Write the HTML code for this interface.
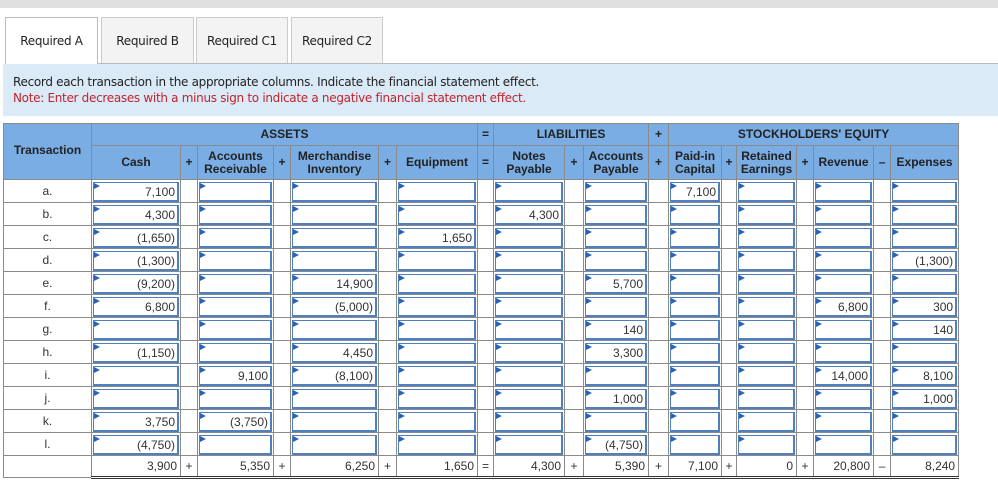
<!DOCTYPE html>
<html><head><meta charset="utf-8"><style>
body{margin:0;background:#fff;width:998px;height:482px;overflow:hidden;font-family:"Liberation Sans",Arial,sans-serif;position:relative}
.top{position:absolute;left:0;top:0;width:998px;height:8px;background:#e0e0e0}
.tab{position:absolute;top:17px;height:46px;border:1px solid #ccc;border-bottom:none;background:#f3f3f3;font-family:"DejaVu Sans",sans-serif;font-size:12px;color:#222;text-align:center;line-height:46px;box-sizing:border-box;letter-spacing:-0.3px}
.tab.a{background:#fff;border-color:#bbb;height:47px}
.tline{position:absolute;left:97px;top:63px;width:901px;height:1px;background:#bbb}
.note{position:absolute;left:3px;top:64px;width:995px;height:52px;background:#dbeaf7;font-family:"DejaVu Sans",sans-serif;font-size:12px;letter-spacing:-0.3px}
.note div{position:absolute;left:10px;white-space:nowrap}
table{position:absolute;left:3px;top:123px;border-collapse:collapse;table-layout:fixed;width:955px}
td,th{border:1px solid #8a8a8a;padding:0;font-size:12px;color:#222;overflow:hidden;white-space:nowrap}
th{background:#79ade4;font-weight:bold;text-align:center;line-height:13px}
tr.h1 th{height:21px}
tr.h2 th{height:33px}
td{height:22px;background:#fff}
td.t{text-align:center;color:#333}
td.i div{margin:1px 1px 0 1px;height:17px;border:2px solid #4f7fbd;border-top-width:1px;border-left-width:1px;text-align:right;padding-right:2px;line-height:18px;position:relative;color:#333;box-sizing:content-box}
td.i div:before{content:"";position:absolute;left:0;top:0;border-left:6px solid #2a63b5;border-top:3px solid transparent;border-bottom:3px solid transparent}
tr.tot td{text-align:right;padding-right:3px;border-bottom:3px double #333;color:#333;height:20px}
tr.tot td.o{text-align:center;padding:0}
</style></head><body>
<div class="top"></div>
<div class="tab a" style="left:5px;width:93px">Required A</div>
<div class="tab" style="left:101px;width:93px">Required B</div>
<div class="tab" style="left:196px;width:92px">Required C1</div>
<div class="tab" style="left:291px;width:92px">Required C2</div>
<div class="tline"></div>
<div class="note"><div style="top:11px;color:#222">Record each transaction in the appropriate columns. Indicate the financial statement effect.</div><div style="top:27px;color:#c0242c">Note: Enter decreases with a minus sign to indicate a negative financial statement effect.</div></div>
<table>
<colgroup><col style="width:88px"><col style="width:89px"><col style="width:17px"><col style="width:76px"><col style="width:17px"><col style="width:88px"><col style="width:18px"><col style="width:81px"><col style="width:16px"><col style="width:71px"><col style="width:19px"><col style="width:65px"><col style="width:20px"><col style="width:53px"><col style="width:15px"><col style="width:60px"><col style="width:17px"><col style="width:60px"><col style="width:17px"><col style="width:68px"></colgroup>
<tr class="h1"><th rowspan="2" style="vertical-align:top;padding-top:20px;height:auto">Transaction</th><th colspan="7">ASSETS</th><th>=</th><th colspan="3">LIABILITIES</th><th>+</th><th colspan="7">STOCKHOLDERS' EQUITY</th></tr>
<tr class="h2"><th>Cash</th><th>+</th><th>Accounts<br>Receivable</th><th>+</th><th>Merchandise<br>Inventory</th><th>+</th><th>Equipment</th><th>=</th><th>Notes<br>Payable</th><th>+</th><th>Accounts<br>Payable</th><th>+</th><th>Paid-in<br>Capital</th><th>+</th><th>Retained<br>Earnings</th><th>+</th><th>Revenue</th><th>–</th><th>Expenses</th></tr>
<tr><td class="t">a.</td><td class="i"><div>7,100</div></td><td></td><td class="i"><div></div></td><td></td><td class="i"><div></div></td><td></td><td class="i"><div></div></td><td></td><td class="i"><div></div></td><td></td><td class="i"><div></div></td><td></td><td class="i"><div>7,100</div></td><td></td><td class="i"><div></div></td><td></td><td class="i"><div></div></td><td></td><td class="i"><div></div></td></tr>
<tr><td class="t">b.</td><td class="i"><div>4,300</div></td><td></td><td class="i"><div></div></td><td></td><td class="i"><div></div></td><td></td><td class="i"><div></div></td><td></td><td class="i"><div>4,300</div></td><td></td><td class="i"><div></div></td><td></td><td class="i"><div></div></td><td></td><td class="i"><div></div></td><td></td><td class="i"><div></div></td><td></td><td class="i"><div></div></td></tr>
<tr><td class="t">c.</td><td class="i"><div>(1,650)</div></td><td></td><td class="i"><div></div></td><td></td><td class="i"><div></div></td><td></td><td class="i"><div>1,650</div></td><td></td><td class="i"><div></div></td><td></td><td class="i"><div></div></td><td></td><td class="i"><div></div></td><td></td><td class="i"><div></div></td><td></td><td class="i"><div></div></td><td></td><td class="i"><div></div></td></tr>
<tr><td class="t">d.</td><td class="i"><div>(1,300)</div></td><td></td><td class="i"><div></div></td><td></td><td class="i"><div></div></td><td></td><td class="i"><div></div></td><td></td><td class="i"><div></div></td><td></td><td class="i"><div></div></td><td></td><td class="i"><div></div></td><td></td><td class="i"><div></div></td><td></td><td class="i"><div></div></td><td></td><td class="i"><div>(1,300)</div></td></tr>
<tr><td class="t">e.</td><td class="i"><div>(9,200)</div></td><td></td><td class="i"><div></div></td><td></td><td class="i"><div>14,900</div></td><td></td><td class="i"><div></div></td><td></td><td class="i"><div></div></td><td></td><td class="i"><div>5,700</div></td><td></td><td class="i"><div></div></td><td></td><td class="i"><div></div></td><td></td><td class="i"><div></div></td><td></td><td class="i"><div></div></td></tr>
<tr><td class="t">f.</td><td class="i"><div>6,800</div></td><td></td><td class="i"><div></div></td><td></td><td class="i"><div>(5,000)</div></td><td></td><td class="i"><div></div></td><td></td><td class="i"><div></div></td><td></td><td class="i"><div></div></td><td></td><td class="i"><div></div></td><td></td><td class="i"><div></div></td><td></td><td class="i"><div>6,800</div></td><td></td><td class="i"><div>300</div></td></tr>
<tr><td class="t">g.</td><td class="i"><div></div></td><td></td><td class="i"><div></div></td><td></td><td class="i"><div></div></td><td></td><td class="i"><div></div></td><td></td><td class="i"><div></div></td><td></td><td class="i"><div>140</div></td><td></td><td class="i"><div></div></td><td></td><td class="i"><div></div></td><td></td><td class="i"><div></div></td><td></td><td class="i"><div>140</div></td></tr>
<tr><td class="t">h.</td><td class="i"><div>(1,150)</div></td><td></td><td class="i"><div></div></td><td></td><td class="i"><div>4,450</div></td><td></td><td class="i"><div></div></td><td></td><td class="i"><div></div></td><td></td><td class="i"><div>3,300</div></td><td></td><td class="i"><div></div></td><td></td><td class="i"><div></div></td><td></td><td class="i"><div></div></td><td></td><td class="i"><div></div></td></tr>
<tr><td class="t">i.</td><td class="i"><div></div></td><td></td><td class="i"><div>9,100</div></td><td></td><td class="i"><div>(8,100)</div></td><td></td><td class="i"><div></div></td><td></td><td class="i"><div></div></td><td></td><td class="i"><div></div></td><td></td><td class="i"><div></div></td><td></td><td class="i"><div></div></td><td></td><td class="i"><div>14,000</div></td><td></td><td class="i"><div>8,100</div></td></tr>
<tr><td class="t">j.</td><td class="i"><div></div></td><td></td><td class="i"><div></div></td><td></td><td class="i"><div></div></td><td></td><td class="i"><div></div></td><td></td><td class="i"><div></div></td><td></td><td class="i"><div>1,000</div></td><td></td><td class="i"><div></div></td><td></td><td class="i"><div></div></td><td></td><td class="i"><div></div></td><td></td><td class="i"><div>1,000</div></td></tr>
<tr><td class="t">k.</td><td class="i"><div>3,750</div></td><td></td><td class="i"><div>(3,750)</div></td><td></td><td class="i"><div></div></td><td></td><td class="i"><div></div></td><td></td><td class="i"><div></div></td><td></td><td class="i"><div></div></td><td></td><td class="i"><div></div></td><td></td><td class="i"><div></div></td><td></td><td class="i"><div></div></td><td></td><td class="i"><div></div></td></tr>
<tr><td class="t">l.</td><td class="i"><div>(4,750)</div></td><td></td><td class="i"><div></div></td><td></td><td class="i"><div></div></td><td></td><td class="i"><div></div></td><td></td><td class="i"><div></div></td><td></td><td class="i"><div>(4,750)</div></td><td></td><td class="i"><div></div></td><td></td><td class="i"><div></div></td><td></td><td class="i"><div></div></td><td></td><td class="i"><div></div></td></tr>
<tr class="tot"><td style="border-bottom:1px solid #8a8a8a"></td><td>3,900</td><td class="o">+</td><td>5,350</td><td class="o">+</td><td>6,250</td><td class="o">+</td><td>1,650</td><td class="o">=</td><td>4,300</td><td class="o">+</td><td>5,390</td><td class="o">+</td><td>7,100</td><td class="o">+</td><td>0</td><td class="o">+</td><td>20,800</td><td class="o">–</td><td>8,240</td></tr>
</table>
</body></html>
